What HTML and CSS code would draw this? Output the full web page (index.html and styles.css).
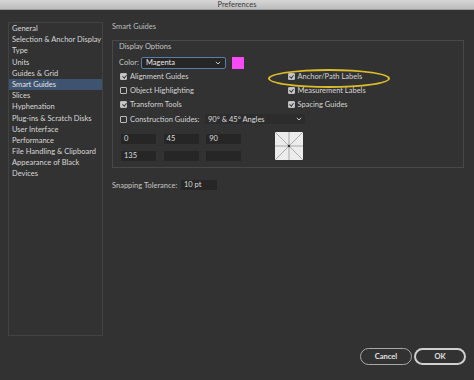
FILE: index.html
```html
<!DOCTYPE html>
<html>
<head>
<meta charset="utf-8">
<link rel="stylesheet" href="styles.css">
</head>
<body>
<div class="window">
  <div class="titlebar">Preferences</div>
  <div class="main">
    <ul class="sidebar">
      <li>General</li>
      <li>Selection &amp; Anchor Display</li>
      <li>Type</li>
      <li>Units</li>
      <li>Guides &amp; Grid</li>
      <li class="selected">Smart Guides</li>
      <li>Slices</li>
      <li>Hyphenation</li>
      <li>Plug-ins &amp; Scratch Disks</li>
      <li>User Interface</li>
      <li>Performance</li>
      <li>File Handling &amp; Clipboard</li>
      <li>Appearance of Black</li>
      <li>Devices</li>
    </ul>
    <div class="content">
      <div class="section-title">Smart Guides</div>
      <div class="group">
        <div class="group-title">Display Options</div>
        <div class="color-row">
          <span class="label">Color:</span>
          <div class="select select-focus"><span>Magenta</span><svg class="chev" width="6" height="4" viewBox="0 0 6 4"><path d="M0.8 0.8 L3 3 L5.2 0.8" fill="none" stroke="#c8c8c8" stroke-width="1"/></svg></div>
          <div class="swatch"></div>
        </div>
        <div class="checks">
          <label class="check"><span class="box on"></span>Alignment Guides</label>
          <label class="check highlight"><span class="box on"></span>Anchor/Path Labels</label>
          <label class="check"><span class="box"></span>Object Highlighting</label>
          <label class="check"><span class="box on"></span>Measurement Labels</label>
          <label class="check"><span class="box on"></span>Transform Tools</label>
          <label class="check"><span class="box on"></span>Spacing Guides</label>
        </div>
        <div class="construct-row">
          <label class="check"><span class="box"></span>Construction Guides:</label>
          <div class="select select-plain"><span>90° &amp; 45° Angles</span><svg class="chev" width="6" height="4" viewBox="0 0 6 4"><path d="M0.8 0.8 L3 3 L5.2 0.8" fill="none" stroke="#c8c8c8" stroke-width="1"/></svg></div>
        </div>
        <div class="angles">
          <div class="angle-grid">
            <div class="field">0</div>
            <div class="field">45</div>
            <div class="field">90</div>
            <div class="field">135</div>
            <div class="field"></div>
            <div class="field"></div>
          </div>
          <svg class="preview" width="28" height="28" viewBox="0 0 28 28">
            <rect x="0" y="0" width="28" height="28" fill="#ececec"/>
            <g stroke="#9a9a9a" stroke-width="0.8">
              <line x1="14" y1="0" x2="14" y2="28"/>
              <line x1="0" y1="14" x2="28" y2="14"/>
              <line x1="0" y1="0" x2="28" y2="28"/>
              <line x1="28" y1="0" x2="0" y2="28"/>
            </g>
            <circle cx="14" cy="14" r="1.2" fill="#333"/>
          </svg>
        </div>
      </div>
      <div class="snap-row">
        <span class="label">Snapping Tolerance:</span>
        <div class="field snap">10 pt</div>
      </div>
    </div>
  </div>
  <div class="footer">
    <button class="btn">Cancel</button>
    <button class="btn btn-ok">OK</button>
  </div>
</div>
</body>
</html>
```
FILE: styles.css
```css
* { box-sizing: border-box; }
html, body { margin: 0; padding: 0; }
body {
  background: #323232;
  font-family: "Lato", "Liberation Sans", sans-serif;
  font-size: 7.5px;
  color: #d2d2d2;
  width: 474px;
  height: 380px;
  overflow: hidden;
}
.window { display: flex; flex-direction: column; height: 380px; }
.titlebar {
  height: 10px;
  background: linear-gradient(#d6d6d6, #bcbcbc);
  border-bottom: 1px solid #9c9c9c;
  color: #3a3a3a;
  font-size: 7.5px;
  line-height: 9px;
  text-align: center;
}
.main { display: flex; padding-top: 12px; height: 326px; }
.sidebar {
  list-style: none;
  margin: 0 0 0 8px;
  padding: 0;
  width: 95px;
  height: 314px;
  border: 1px solid #424242;
}
.sidebar li {
  height: 11.2px;
  line-height: 11.2px;
  padding-left: 3px;
  white-space: nowrap;
  color: #d8d8d8;
}
.sidebar li.selected { background: #3d5370; color: #e4e4e4; }
.content { margin-left: 9px; width: 352px; }
.section-title { height: 10px; line-height: 10px; margin-top: 0; color: #bdbdbd; }
.group {
  margin-top: 8px;
  border: 1px solid #484848;
  padding: 1px 6px 7px 6px;
  height: 128px;
}
.group-title { height: 10px; line-height: 10px; color: #c4c4c4; }
.color-row { display: flex; align-items: center; margin-top: 4.5px; height: 12px; }
.label { color: #c4c4c4; white-space: nowrap; }
.color-row .label { width: 22px; }
.select {
  display: flex;
  align-items: center;
  justify-content: space-between;
  color: #e6e6e6;
  padding: 0 4px;
}
.select-focus {
  width: 85px;
  height: 12px;
  background: #262626;
  border: 1px solid #5b7ea8;
  border-radius: 2px;
}
.select-plain {
  width: 100px;
  height: 10px;
  background: #2c2c2c;
  margin-left: 6px;
  padding: 0 3px;
  color: #dcdcdc;
}
.chev { display: block; }
.swatch { width: 12px; height: 12px; background: #f84af8; margin-left: 6px; }
.checks {
  display: grid;
  grid-template-columns: 167.5px auto;
  grid-auto-rows: 14.2px;
  margin-top: 1px;
  margin-left: 1px;
}
.check { display: flex; align-items: center; white-space: nowrap; color: #d4d4d4; }
.highlight { position: relative; }
.highlight::after {
  content: "";
  position: absolute;
  left: -20px;
  top: -0.8px;
  width: 118px;
  height: 15px;
  border: 2px solid #dcbc2a;
  border-radius: 50%;
}
.box {
  width: 7px;
  height: 7px;
  border: 1px solid #bdbdbd;
  border-radius: 1px;
  margin-right: 3px;
  position: relative;
  flex: none;
}
.box.on { background: #c6c6c6; }
.box.on::after {
  content: "";
  position: absolute;
  left: 1.5px;
  top: 0px;
  width: 1.6px;
  height: 3.3px;
  border: solid #3a3a3a;
  border-width: 0 1px 1px 0;
  transform: rotate(40deg);
}
.construct-row { display: flex; align-items: center; height: 14px; margin-left: 1px; }
.construct-row .check { width: 79px; }
.angles { display: flex; align-items: flex-start; margin-top: 6px; margin-left: 2px; }
.angle-grid {
  display: grid;
  grid-template-columns: repeat(3, 35px);
  column-gap: 7.6px;
  row-gap: 7.5px;
  margin-top: 2px;
}
.field {
  height: 9.5px;
  line-height: 9.5px;
  background: #262626;
  color: #dedede;
  padding-left: 3px;
}
.preview { display: block; margin-left: 34px; }
.snap-row { display: flex; align-items: center; margin-top: 12px; height: 10px; }
.snap-row .label { width: 69px; }
.field.snap { width: 36px; }
.footer {
  display: flex;
  justify-content: flex-end;
  gap: 2px;
  padding: 12px 8px 0 0;
}
.btn {
  width: 52px;
  height: 17px;
  border-radius: 9px;
  border: 1.5px solid #a8a8a8;
  background: transparent;
  color: #e2e2e2;
  font-family: "Lato", "Liberation Sans", sans-serif;
  font-size: 7.5px;
  font-weight: bold;
  padding: 0;
}
.btn-ok { border: 2px solid #d0d0d0; }
```
